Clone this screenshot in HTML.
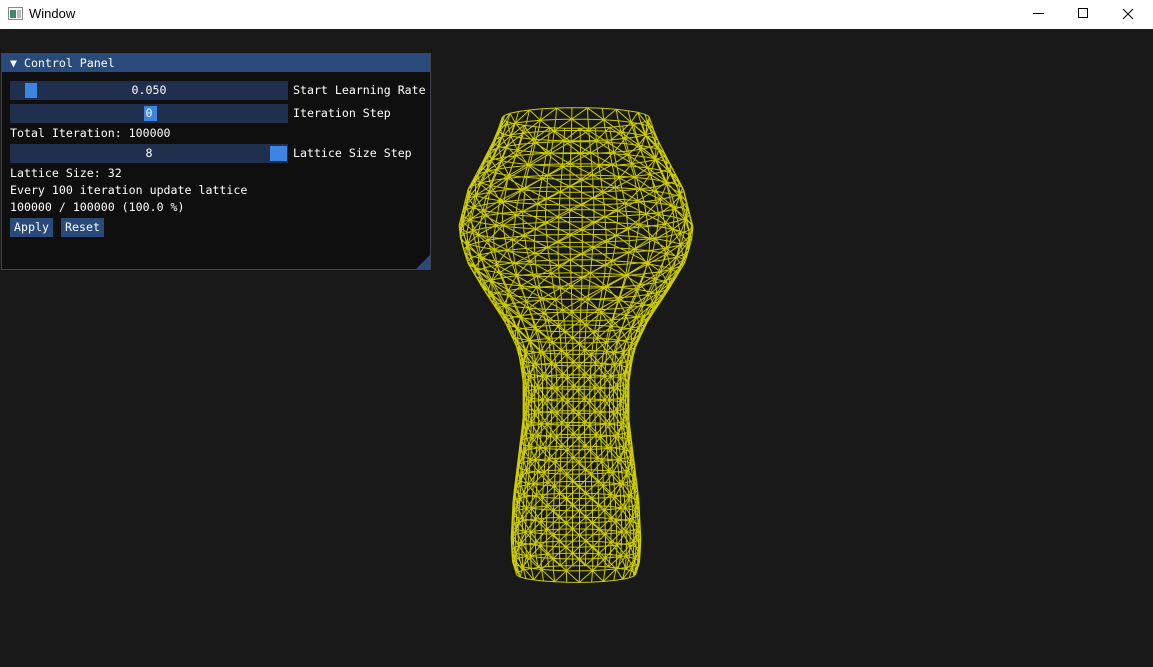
<!DOCTYPE html>
<html><head><meta charset="utf-8"><style>
body{margin:0;width:1153px;height:667px;background:#191919;overflow:hidden;position:relative;font-family:"DejaVu Sans Mono","Liberation Mono",monospace;}
#tb{position:absolute;left:0;top:0;width:1153px;height:29px;background:#fff;}
#tb .t{position:absolute;left:29px;top:6px;font:13px "Liberation Sans",sans-serif;color:#000;}
#panel{position:absolute;left:1px;top:53px;width:428px;height:215px;background:#0f0f0f;border:1px solid #42424d;}
#hdr{height:18px;background:#294a7a;color:#fff;font-size:11.6px;line-height:18px;padding-left:8px;}
.sl{position:absolute;left:8px;width:278px;height:19px;background:#1f2f4d;color:#fff;font-size:11.6px;text-align:center;line-height:19px;}
.g{position:absolute;top:2px;height:15px;background:#3d85e0;}
.lb{position:absolute;left:291px;color:#fff;font-size:11.6px;}
.tx{position:absolute;left:8px;color:#fff;font-size:11.6px;}
.bt{position:absolute;top:164px;height:19px;background:#294a7a;color:#fff;font-size:11.6px;line-height:19px;text-align:center;}
</style></head><body>
<div id="tb"><svg style="position:absolute;left:8px;top:7px" width="16" height="14"><rect x="0.5" y="0.5" width="14" height="12" fill="#fff" stroke="#888"/><rect x="2" y="3" width="6" height="8" fill="#3a8a6a"/><rect x="9" y="3" width="4" height="8" fill="#bbb"/></svg><span class="t">Window</span>
<svg style="position:absolute;left:1030px;top:6px" width="115" height="16"><line x1="3" y1="7.5" x2="14" y2="7.5" stroke="#000"/><rect x="48.5" y="2.5" width="9" height="9" fill="none" stroke="#000"/><path d="M93 3L103 13M103 3L93 13" stroke="#000"/></svg></div>
<div id="panel"><div id="hdr">▼ Control Panel</div>
<div class="sl" style="top:27px">0.050<div class="g" style="left:15px;width:12px"></div></div>
<div class="lb" style="top:29px">Start Learning Rate</div>
<div class="sl" style="top:50px"><div class="g" style="left:134px;width:13px"></div><span style="position:relative">0</span></div>
<div class="lb" style="top:52px">Iteration Step</div>
<div class="tx" style="top:72px">Total Iteration: 100000</div>
<div class="sl" style="top:90px">8<div class="g" style="left:260px;width:17px"></div></div>
<div class="lb" style="top:92px">Lattice Size Step</div>
<div class="tx" style="top:112px">Lattice Size: 32</div>
<div class="tx" style="top:129px">Every 100 iteration update lattice</div>
<div class="tx" style="top:146px">100000 / 100000 (100.0 %)</div>
<div class="bt" style="left:8px;width:43px">Apply</div>
<div class="bt" style="left:59px;width:43px">Reset</div>
<svg style="position:absolute;right:0;bottom:0" width="14" height="14"><path d="M14 0L14 14L0 14Z" fill="#294a7a"/></svg>
</div>
<svg id="mesh" style="position:absolute;left:0;top:0" width="1153" height="667"></svg>
<script>
var P=[[112,72],[125,76],[140,82],[160,92],[190,108],[230,118],[260,110],[290,92],[320,72],[350,58],[380,53],[420,53],[460,58],[500,63],[540,65],[570,63],[580,55]];
function R(y){for(var i=0;i<P.length-1;i++){if(y<=P[i+1][0]){var t=(y-P[i][0])/(P[i+1][0]-P[i][0]);return P[i][1]+t*(P[i+1][1]-P[i][1]);}}return P[P.length-1][1];}
var cx=576,N=30,d="",rings=[];
for(var y=118;y<=580;y+=12){var r=R(y),b=r*0.14,row=[];for(var k=0;k<=N;k++){var a=k/N*2*Math.PI+0.05;row.push([cx+r*Math.cos(a),y+b*Math.sin(a)]);}rings.push(row);}
function L(p,q){d+="M"+p[0].toFixed(1)+" "+p[1].toFixed(1)+"L"+q[0].toFixed(1)+" "+q[1].toFixed(1);}
for(var i=0;i<rings.length;i++){for(var k=0;k<N;k++){L(rings[i][k],rings[i][k+1]);if(i<rings.length-1){L(rings[i][k],rings[i+1][k]);if((i+k)%2)L(rings[i][k],rings[i+1][k+1]);else L(rings[i][k+1],rings[i+1][k]);}}}
document.getElementById("mesh").innerHTML='<path d="'+d+'" stroke="#cccc00" stroke-width="1" fill="none"/>';
</script>
</body></html>
